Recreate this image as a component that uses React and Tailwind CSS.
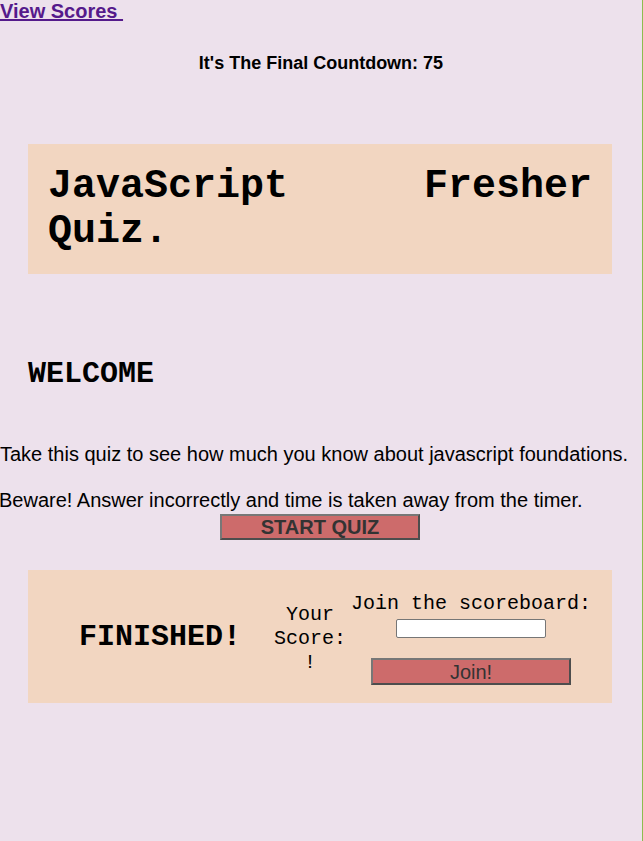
import React from 'react';

const mono = "font-['Liberation_Mono','Courier_New',monospace]";
const btnBorder = 'border-2 border-solid border-t-[#777777] border-l-[#777777] border-b-[#4d4d4d] border-r-[#4d4d4d]';

export default function App() {
    return (
        <div className="min-h-[841px] bg-[#ede1ec] border-r border-[#8cbd4e] font-['Liberation_Sans',Arial,sans-serif] text-black">
            {/* top link */}
            <a href="#scores" className="block w-fit text-[20px] leading-[23px] font-bold underline text-[#551a8b]">
                View Scores&nbsp;
            </a>

            {/* timer */}
            <h4 className="mt-[30px] text-center text-[18px] leading-[21px] font-bold">
                It's The Final Countdown: 75
            </h4>

            {/* title card */}
            <div className="mt-[70px] ml-[28px] w-[584px] bg-[#f2d6c1] p-[20px]">
                <h1 className={`${mono} text-[40px] leading-[45px] font-bold text-justify`}>
                    JavaScript Fresher Quiz.
                </h1>
            </div>

            {/* intro */}
            <h2 className={`${mono} mt-[83px] ml-[28px] text-[30px] leading-[34px] font-bold`}>WELCOME</h2>
            <p className="mt-[52px] text-[20px] leading-[23px]">
                Take this quiz to see how much you know about javascript foundations.
            </p>
            <p className="mt-[23px] -ml-[1px] text-[20px] leading-[23px]">
                Beware! Answer incorrectly and time is taken away from the timer.
            </p>
            <div className="mt-[2px] flex justify-center pr-[2px]">
                <button className={`w-[200px] h-[26px] bg-[#cd6b6b] ${btnBorder} text-[20px] leading-[20px] font-bold text-[#333333]`}>
                    START QUIZ
                </button>
            </div>

            {/* finished card */}
            <div className="mt-[30px] ml-[28px] w-[584px] h-[133px] bg-[#f2d6c1] flex items-center pl-[51px]">
                <h2 className={`${mono} text-[30px] leading-[34px] font-bold`}>FINISHED!</h2>
                <p className={`${mono} ml-[33px] mt-[5px] w-[72px] text-center text-[20px] leading-[24px]`}>
                    Your Score: !
                </p>
                <div className="ml-[5px] mt-[4px] flex flex-col items-center">
                    <label className={`${mono} text-[20px] leading-[23px]`}>Join the scoreboard:</label>
                    <input type="text" className="mt-[4px] w-[150px] h-[19px] bg-white border border-[#767676] rounded-[2px]" />
                    <button className={`mt-[20px] w-[200px] h-[27px] bg-[#cd6b6b] ${btnBorder} text-[20px] leading-[20px] text-[#333333]`}>
                        Join!
                    </button>
                </div>
            </div>
        </div>
    );
}
